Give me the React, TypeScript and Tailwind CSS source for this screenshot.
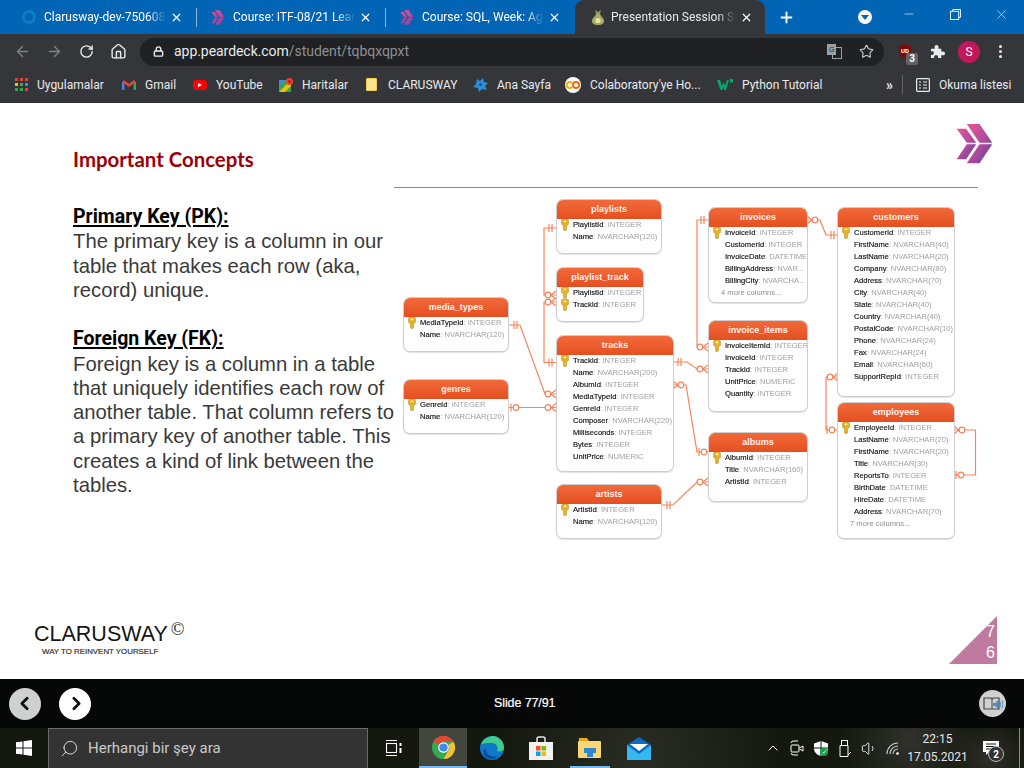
import React from 'react';
import { ArrowLeft, ArrowRight, RotateCw, House, Lock, Star, MoreVertical, Plus, X, Minus, ChevronUp, ChevronLeft, ChevronRight, Search, Volume1 } from 'lucide-react';

const UI_FONT = "font-['Roboto',sans-serif]";

// Clarusway chevrons, used big on the slide and small on the tabs
const Chevrons: React.FC<{ className?: string; id: string }> = ({ className, id }) => (
  <svg viewBox="80 40 110 122" className={className}>
    <defs>
      <linearGradient id={id} x1="0" y1="0" x2="1" y2="1">
        <stop offset="0" stopColor="#e8559a" />
        <stop offset="0.55" stopColor="#b04a9c" />
        <stop offset="1" stopColor="#55429c" />
      </linearGradient>
    </defs>
    <path d="M82 57H110L140 99H112Z M112 103H140L110 148H82Z" fill={`url(#${id})`} />
    <path d="M112 43H150L188 99H150Z M150 103H188L150 160H112Z" fill={`url(#${id})`} />
  </svg>
);

const Tab: React.FC<{ title: string; icon: React.ReactNode; active?: boolean; sep?: boolean }> = ({ title, icon, active, sep }) => (
  <div className={active
    ? 'relative flex h-[34px] w-[190px] shrink-0 items-center rounded-t-[9px] bg-[#35363a] pl-[15px]'
    : 'relative flex h-[34px] w-[189px] shrink-0 items-center pl-[13px]'}>
    <div className="flex w-[16px] shrink-0 items-center justify-center">{icon}</div>
    <div className={active
      ? 'ml-[5px] w-[125px] overflow-hidden whitespace-nowrap text-[12px] text-[#e8eaed] [mask-image:linear-gradient(90deg,#000_85%,transparent)]'
      : 'ml-[7px] w-[122px] overflow-hidden whitespace-nowrap text-[12px] text-white [mask-image:linear-gradient(90deg,#000_85%,transparent)]'}>{title}</div>
    <X size={13} strokeWidth={2.2} className="ml-[4px] shrink-0 text-white" />
    {sep && <div className="absolute right-0 top-[8px] h-[19px] w-px bg-[#8fb6d8]" />}
  </div>
);

const TabStrip = () => (
  <div className={`flex h-[34px] items-center bg-[#0264b4] pl-[8px] ${UI_FONT}`}>
    <Tab
      sep
      title="Clarusway-dev-750608 -"
      icon={<div className="h-[14px] w-[14px] rounded-full border-[3px] border-[#0b7fc7]" />}
    />
    <Tab sep title="Course: ITF-08/21 Learn" icon={<Chevrons id="fav1" className="h-[15px] w-[14px]" />} />
    <Tab title="Course: SQL, Week: Aggr" icon={<Chevrons id="fav2" className="h-[15px] w-[14px]" />} />
    <Tab
      active
      title="Presentation Session Stud"
      icon={
        <svg viewBox="0 0 14 17" className="h-[17px] w-[14px]">
          <path d="M4 1L7 3L10 1L9 5H5Z" fill="#8d9a56" />
          <path d="M5 5H9C10 8 13 9 13 12C13 15 10 16 7 16C4 16 1 15 1 12C1 9 4 8 5 5Z" fill="#a3ad66" />
          <circle cx="7" cy="11.5" r="2.6" fill="#e8e2a0" />
        </svg>
      }
    />
    <Plus size={17} strokeWidth={2.6} className="ml-[13px] text-white" />
    <div className="ml-[63px] flex h-[14px] w-[14px] items-center justify-center rounded-full bg-white">
      <div className="h-0 w-0 border-x-[4px] border-t-[5px] border-x-transparent border-t-[#0264b4]" />
    </div>
    <Minus size={14} strokeWidth={1} className="ml-[30px] mt-[-6px] text-white" />
    <svg viewBox="0 0 12 12" className="ml-[34px] mt-[-6px] h-[11px] w-[11px] text-white" fill="none" stroke="currentColor">
      <path d="M3 2.5V.5H11.5V9H9.5" />
      <rect x=".5" y="2.5" width="9" height="9" />
    </svg>
    <X size={15} strokeWidth={1} className="ml-[33px] mt-[-6px] text-white" />
  </div>
);

const Toolbar = () => (
  <div className={`flex h-[35px] items-center bg-[#35363a] ${UI_FONT}`}>
    <ArrowLeft size={17} strokeWidth={2} className="ml-[14px] text-[#7f8184]" />
    <ArrowRight size={17} strokeWidth={2} className="ml-[15px] text-[#7f8184]" />
    <RotateCw size={15} strokeWidth={2.2} className="ml-[16px] text-[#e8eaed]" />
    <House size={17} strokeWidth={2} className="ml-[16px] text-[#e8eaed]" />
    <div className="ml-[13px] flex h-[28px] w-[744px] items-center rounded-full bg-[#202124] pl-[13px] pr-[10px]">
      <Lock size={11} strokeWidth={3} className="text-[#e8eaed]" />
      <div className="ml-[10px] text-[14px] tracking-[-0.05px] text-[#e8eaed]">
        app.peardeck.com<span className="text-[#8d8f92]">/student/tqbqxqpxt</span>
      </div>
      <div className="ml-auto flex items-center gap-[17px]">
        <svg viewBox="0 0 15 15" className="h-[15px] w-[15px]">
          <rect x="0" y="0" width="9" height="11" fill="#9aa0a6" />
          <rect x="5.5" y="3.5" width="9" height="11" fill="none" stroke="#9aa0a6" />
          <text x="2" y="8" fontSize="7" fontFamily="Liberation Sans" fill="#202124">G</text>
        </svg>
        <Star size={15} strokeWidth={1.8} className="text-[#c6c8ca]" />
      </div>
    </div>
    <div className="relative ml-[14px] h-[15px] w-[15px]">
      <svg viewBox="0 0 14 15" className="h-[15px] w-[14px]">
        <path d="M7 0L13 2V8C13 11 10 14 7 15C4 14 1 11 1 8V2Z" fill="#7a0c0c" />
      </svg>
      <span className="absolute left-[3px] top-[3px] text-[6px] font-bold leading-[7px] text-white">UD</span>
      <span className="absolute left-[8px] top-[9px] h-[12px] w-[12px] rounded-[2px] bg-[#5f6368] text-center text-[10px] font-bold leading-[12px] text-white">3</span>
    </div>
    <svg viewBox="0 0 16 16" className="ml-[17px] h-[15px] w-[15px] text-[#e8eaed]" fill="currentColor">
      <path d="M1 5H5C4.5 2 5.5 1 7 1S9.500 2 9 5H12V8C15 7.500 16 8.500 16 10S15 12.500 12 12V15H8.500C9 12.500 8 12 6.500 12S4 12.500 4.500 15H1V11.500C3.500 12 4 11 4 9.500S3.500 7.500 1 8Z" />
    </svg>
    <div className="ml-[13px] flex h-[22px] w-[22px] items-center justify-center rounded-full bg-[#c2185b] text-[12px] text-white">S</div>
    <MoreVertical size={17} strokeWidth={2.4} className="ml-[12px] text-[#e8eaed]" />
  </div>
);

type Bookmark = { label: string; width: string; icon: React.ReactNode };

const bookmarks: Bookmark[] = [
  {
    label: 'Uygulamalar',
    width: 'w-[107px]',
    icon: (
      <svg viewBox="0 0 13 13" className="h-[13px] w-[13px]">
        {[0, 5, 10].map((y) => [0, 5, 10].map((x) => (
          <rect key={`${x}-${y}`} x={x} y={y} width="3" height="3" fill={y === 0 ? (x === 5 ? '#ea4335' : '#d8443a') : y === 5 ? (x === 0 ? '#fbbc04' : x === 5 ? '#34a853' : '#4285f4') : x === 10 ? '#ea4335' : '#34a853'} />
        )))}
      </svg>
    ),
  },
  {
    label: 'Gmail',
    width: 'w-[71px]',
    icon: (
      <svg viewBox="0 0 14 11" className="h-[11px] w-[14px]" fill="none" strokeWidth="2.400">
        <path d="M1.200 11V3" stroke="#4285f4" />
        <path d="M12.800 11V3" stroke="#34a853" />
        <path d="M1.200 2L7 6.500L12.800 2" stroke="#ea4335" />
      </svg>
    ),
  },
  {
    label: 'YouTube',
    width: 'w-[86px]',
    icon: (
      <div className="flex h-[10px] w-[14px] items-center justify-center rounded-[3px] bg-[#f00]">
        <div className="h-0 w-0 border-y-[2.500px] border-l-[4px] border-y-transparent border-l-white" />
      </div>
    ),
  },
  {
    label: 'Haritalar',
    width: 'w-[87px]',
    icon: (
      <svg viewBox="0 0 14 14" className="h-[14px] w-[14px]">
        <rect y="2" width="12" height="12" fill="#34a853" />
        <path d="M0 14L12 2V8L6 14Z" fill="#fbbc04" />
        <path d="M0 2H6L0 8Z" fill="#4285f4" />
        <circle cx="10.500" cy="3.500" r="3.500" fill="#ea4335" />
        <circle cx="10.500" cy="3.500" r="1.200" fill="#a50e0e" />
      </svg>
    ),
  },
  {
    label: 'CLARUSWAY',
    width: 'w-[107px]',
    icon: <div className="mr-[2px] h-[13px] w-[11px] rounded-[1px] border border-[#f7cb4d] bg-[#fde293]" />,
  },
  {
    label: 'Ana Sayfa',
    width: 'w-[92px]',
    icon: (
      <svg viewBox="0 0 15 14" className="h-[14px] w-[15px]" fill="#2f8fd6">
        <path d="M4 1L7 3L10 0L11 4L15 5L12 8L14 12L9 11L6 14L5 10L0 9L3 6Z" />
        <circle cx="7.500" cy="6.500" r="1.500" fill="#0b5aa3" />
      </svg>
    ),
  },
  {
    label: "Colaboratory'ye Ho...",
    width: 'w-[152px]',
    icon: (
      <div className="flex h-[16px] w-[16px] items-center justify-center rounded-full bg-[#fafafa]">
        <svg viewBox="0 0 14 8" className="h-[8px] w-[14px]" fill="none" stroke="#f9ab00" strokeWidth="2">
          <path d="M6 2A3 3 0 1 0 6 6" />
          <circle cx="10" cy="4" r="3" stroke="#e8710a" />
        </svg>
      </div>
    ),
  },
  {
    label: 'Python Tutorial',
    width: 'w-[150px]',
    icon: (
      <svg viewBox="0 0 16 11" className="h-[11px] w-[16px]" fill="#04aa6d">
        <path d="M0 1H3L5 7L6.500 3L8 7L10 1H12L9 11H7L6.500 8L5 11H3.500Z" />
        <rect x="13" y="0" width="3" height="3.500" />
      </svg>
    ),
  },
];

const Bookmarks = () => (
  <div className={`flex h-[34px] items-center border-b border-[#2d2e31] bg-[#35363a] pb-[2px] pl-[15px] text-[12px] text-[#e8eaed] ${UI_FONT}`}>
    {bookmarks.map((b) => (
      <div key={b.label} className={`flex shrink-0 items-center ${b.width}`}>
        {b.icon}
        <span className="ml-[9px] whitespace-nowrap">{b.label}</span>
      </div>
    ))}
    <span className="ml-[19px] text-[14px] font-bold leading-none">»</span>
    <div className="ml-[9px] h-[19px] w-px bg-[#5f6368]" />
    <svg viewBox="0 0 14 14" className="ml-[13px] h-[14px] w-[14px]" fill="none" stroke="#e8eaed" strokeWidth="1.200">
      <rect x=".6" y=".6" width="12.800" height="12.800" rx="1" />
      <path d="M3 4H5M3 7H5M3 10H5M7 4H11M7 7H11M7 10H11" />
    </svg>
    <span className="ml-[9px] whitespace-nowrap">Okuma listesi</span>
  </div>
);

type ErdTable = { name: string; pos: string; rows: string[]; more?: string; keys?: number };

const erdTables: ErdTable[] = [
  { name: 'playlists', pos: 'left-[162px] top-[9px] w-[106px] h-[55px]', rows: ['PlaylistId|INTEGER', 'Name|NVARCHAR(120)'] },
  { name: 'playlist_track', pos: 'left-[162px] top-[77px] w-[88px] h-[55px]', rows: ['PlaylistId|INTEGER', 'TrackId|INTEGER'], keys: 2 },
  { name: 'media_types', pos: 'left-[9px] top-[107px] w-[106px] h-[55px]', rows: ['MediaTypeId|INTEGER', 'Name|NVARCHAR(120)'] },
  { name: 'genres', pos: 'left-[9px] top-[189px] w-[106px] h-[55px]', rows: ['GenreId|INTEGER', 'Name|NVARCHAR(120)'] },
  {
    name: 'tracks',
    pos: 'left-[162px] top-[145px] w-[118px] h-[137px]',
    rows: ['TrackId|INTEGER', 'Name|NVARCHAR(200)', 'AlbumId|INTEGER', 'MediaTypeId|INTEGER', 'GenreId|INTEGER', 'Composer|NVARCHAR(220)', 'Milliseconds|INTEGER', 'Bytes|INTEGER', 'UnitPrice|NUMERIC'],
  },
  { name: 'artists', pos: 'left-[162px] top-[294px] w-[106px] h-[55px]', rows: ['ArtistId|INTEGER', 'Name|NVARCHAR(120)'] },
  {
    name: 'invoices',
    pos: 'left-[314px] top-[17px] w-[100px] h-[96px]',
    rows: ['InvoiceId|INTEGER', 'CustomerId|INTEGER', 'InvoiceDate|DATETIME', 'BillingAddress|NVAR...', 'BillingCity|NVARCHA...'],
    more: '4 more columns...',
  },
  {
    name: 'invoice_items',
    pos: 'left-[314px] top-[130px] w-[100px] h-[92px]',
    rows: ['InvoiceItemId|INTEGER', 'InvoiceId|INTEGER', 'TrackId|INTEGER', 'UnitPrice|NUMERIC', 'Quantity|INTEGER'],
  },
  { name: 'albums', pos: 'left-[314px] top-[242px] w-[100px] h-[70px]', rows: ['AlbumId|INTEGER', 'Title|NVARCHAR(160)', 'ArtistId|INTEGER'] },
  {
    name: 'customers',
    pos: 'left-[443px] top-[17px] w-[118px] h-[190px]',
    rows: ['CustomerId|INTEGER', 'FirstName|NVARCHAR(40)', 'LastName|NVARCHAR(20)', 'Company|NVARCHAR(80)', 'Address|NVARCHAR(70)', 'City|NVARCHAR(40)', 'State|NVARCHAR(40)', 'Country|NVARCHAR(40)', 'PostalCode|NVARCHAR(10)', 'Phone|NVARCHAR(24)', 'Fax|NVARCHAR(24)', 'Email|NVARCHAR(60)', 'SupportRepId|INTEGER'],
  },
  {
    name: 'employees',
    pos: 'left-[443px] top-[212px] w-[118px] h-[137px]',
    rows: ['EmployeeId|INTEGER', 'LastName|NVARCHAR(20)', 'FirstName|NVARCHAR(20)', 'Title|NVARCHAR(30)', 'ReportsTo|INTEGER', 'BirthDate|DATETIME', 'HireDate|DATETIME', 'Address|NVARCHAR(70)'],
    more: '7 more columns...',
  },
];

const KeyIcon = () => (
  <svg viewBox="0 0 8 12" className="h-[12px] w-[8px] shrink-0">
    <path d="M0.500 1.500Q0.500 0 2 0H6Q7.500 0 7.500 1.500V5Q7.500 6 5.500 6.500V11L4 12L2.500 11V6.500Q0.500 6 0.500 5Z" fill="#e3b32c" stroke="#b98a1c" strokeWidth=".5" />
    <rect x="2.800" y="1.500" width="2.400" height="1.600" fill="#fff3b0" />
  </svg>
);

const ErdNode: React.FC<{ table: ErdTable }> = ({ table }) => (
  <div className={`absolute overflow-hidden rounded-[7px] border border-[#cfcfcf] bg-white font-['Liberation_Sans',sans-serif] shadow-[0_1px_1px_rgba(0,0,0,0.12)] ${table.pos}`}>
    <div className="h-[19px] bg-gradient-to-b from-[#f2693a] to-[#e54f20] text-center text-[9px] font-bold leading-[18px] text-[#fff3ec]">{table.name}</div>
    {table.rows.map((row, i) => {
      const [col, type] = row.split('|');
      return (
        <div key={col} className="flex h-[12px] items-center whitespace-nowrap pl-[4px] text-[7.6px]">
          <div className="w-[8px] shrink-0">{i < (table.keys ?? 1) && <KeyIcon />}</div>
          <span className="ml-[4px] text-[#111] [-webkit-text-stroke:0.15px_#111]">{col}</span>
          <span className="text-[#a0a0a0]">: {type}</span>
        </div>
      );
    })}
    {table.more && <div className="flex h-[12px] items-center pl-[12px] text-[7.6px] text-[#8f8f8f]">{table.more}</div>}
  </div>
);

// One/many line ends of the diagram, in page coordinates
const Bars: React.FC<{ x: number; y: number }> = ({ x, y }) => (
  <path d={`M${x} ${y - 4}V${y + 4}M${x + 3} ${y - 4}V${y + 4}`} />
);
const Crow: React.FC<{ x: number; y: number; dir: 1 | -1 }> = ({ x, y, dir }) => (
  <g>
    <circle cx={x} cy={y} r="2.800" fill="#fff" />
    <path d={`M${x + 3 * dir} ${y}L${x + 8 * dir} ${y - 4}M${x + 3 * dir} ${y}L${x + 8 * dir} ${y + 4}`} />
  </g>
);
const ZeroOne: React.FC<{ x: number; y: number }> = ({ x, y }) => (
  <g>
    <circle cx={x} cy={y} r="2.800" fill="#fff" />
    <path d={`M${x - 5} ${y - 4}V${y + 4}`} />
  </g>
);

const Connectors = () => (
  <svg viewBox="394 190 584 360" className="absolute left-0 top-0 h-[360px] w-[584px]" fill="none" stroke="#f7845a" strokeWidth="1.200">
    <path d="M556 228H544V295H556" />
    <path d="M556 362.500H544V302H556" />
    <path d="M509 325H520L545 394H556" />
    <path d="M509 407.500H556" />
    <path d="M673 362H687L697 369H708" />
    <path d="M673 385H686L697 452H708" />
    <path d="M662 505H673L697 482H708" />
    <path d="M708 220H697V347H708" />
    <path d="M808 220H820L826 235H837" />
    <path d="M837 377H826V430H837" />
    <path d="M954 430H975.500V475H954" />
    <Bars x={549} y={228} />
    <Bars x={549} y={362.5} />
    <Bars x={514} y={325} />
    <Bars x={678} y={362} />
    <Bars x={667} y={505} />
    <Bars x={701} y={220} />
    <Bars x={831} y={235} />
    <Crow x={548} y={295} dir={1} />
    <Crow x={548} y={302} dir={1} />
    <Crow x={548} y={394} dir={1} />
    <Crow x={548} y={407.5} dir={1} />
    <Crow x={681} y={385} dir={-1} />
    <Crow x={700} y={369} dir={1} />
    <Crow x={700} y={347} dir={1} />
    <Crow x={700} y={482} dir={1} />
    <Crow x={815} y={220} dir={-1} />
    <Crow x={830} y={377} dir={1} />
    <Crow x={962} y={430} dir={-1} />
    <ZeroOne x={516} y={407.5} />
    <ZeroOne x={704} y={452} />
    <ZeroOne x={832} y={430} />
    <ZeroOne x={961} y={475} />
  </svg>
);

const Slide = () => (
  <div className="flex h-[576px] flex-col overflow-hidden bg-white font-['Liberation_Sans',sans-serif]">
    <div className="flex h-[504px]">
      <div className="w-[394px] shrink-0 pl-[73px]">
        <h1 className="mt-[45px] font-['Lato',sans-serif] text-[20.400px] font-bold leading-[22px] text-[#9c0006]">Important Concepts</h1>
        <div className="mt-[34px] whitespace-nowrap text-[20.300px] leading-[24.250px] text-[#3a3a3a]">
          <p><b className="font-['Roboto',sans-serif] text-[19.500px] text-black underline decoration-2 underline-offset-2">Primary Key (PK):</b></p>
          <p>The primary key is a column in our</p>
          <p>table that makes each row (aka,</p>
          <p className="mb-[24.250px]">record) unique.</p>
          <p><b className="font-['Roboto',sans-serif] text-[19.500px] text-black underline decoration-2 underline-offset-2">Foreign Key (FK):</b></p>
          <p>Foreign key is a column in a table</p>
          <p>that uniquely identifies each row of</p>
          <p>another table. That column refers to</p>
          <p>a primary key of another table. This</p>
          <p>creates a kind of link between the</p>
          <p>tables.</p>
        </div>
      </div>
      <div className="w-[584px] shrink-0">
        <div className="flex h-[84px] justify-end pt-[20px]">
          <Chevrons id="brand" className="mr-[-15px] h-[41px] w-[37px]" />
        </div>
        <div className="h-px bg-[#8a8a8a]" />
        <div className="relative mt-[2px] h-[360px] blur-[0.35px]">
          <Connectors />
          {erdTables.map((t) => <ErdNode key={t.name} table={t} />)}
        </div>
      </div>
    </div>
    <div className="flex flex-1 items-start justify-between pl-[34px] pr-[27px]">
      <div className="mt-[15px]">
        <div className="flex items-start text-[21.500px] leading-[24px] text-[#161616]">
          CLARUSWAY<span className="ml-[3px] mt-[-3px] font-['Liberation_Serif',serif] text-[18px] leading-[20px]">©</span>
        </div>
        <div className="ml-[8px] mt-[1px] text-[7.900px] leading-[10px] text-[#333] [-webkit-text-stroke:0.2px_#333]">WAY TO REINVENT YOURSELF</div>
      </div>
      <div className="mt-[9px] h-[48px] w-[48px] whitespace-pre-line bg-[#c07aa0] pr-[2px] pt-[5px] text-right text-[16px] leading-[21px] text-white [clip-path:polygon(100%_0,100%_100%,0_100%)]">
        {'7\n6'}
      </div>
    </div>
  </div>
);

const SlideBar = () => (
  <div className="relative flex h-[49px] items-center bg-[#060808] pl-[9px] pr-[18px] font-['Liberation_Sans',sans-serif]">
    <div className="flex h-[32px] w-[32px] items-center justify-center rounded-full bg-[#cfd0d0]">
      <ChevronLeft size={21} strokeWidth={3.2} className="mr-[2px] text-[#111]" />
    </div>
    <div className="ml-[18px] flex h-[32px] w-[32px] items-center justify-center rounded-full bg-white">
      <ChevronRight size={21} strokeWidth={3.2} className="ml-[2px] text-[#111]" />
    </div>
    <div className="flex-1 pl-[403px] text-[12.500px] tracking-[-0.1px] text-white [-webkit-text-stroke:0.2px_white]">Slide 77/91</div>
    <div className="flex h-[27px] w-[27px] items-center justify-center rounded-full bg-[#cfd0d0]">
      <svg viewBox="0 0 20 16" className="h-[16px] w-[20px]" fill="none">
        <path d="M1 2H8L9 3L10 2H16V13H1Z" stroke="#444" strokeWidth="1.200" />
        <path d="M9 3V13" stroke="#444" />
        <path d="M10 7H12L15 4.500V12.500L12 10H10Z" fill="#4a90d9" />
        <path d="M17 6Q18.500 8.500 17 11M19 4.500Q20.500 8.500 19 12.500" stroke="#4a90d9" />
      </svg>
    </div>
  </div>
);

const Taskbar = () => (
  <div className={`relative flex h-[40px] items-stretch overflow-hidden bg-[#15180f] ${UI_FONT}`}>
    <div className="absolute inset-0 bg-[radial-gradient(circle_at_640px_28px,#2a2d24_0,transparent_140px),radial-gradient(circle_at_910px_12px,#30322b_0,transparent_70px),radial-gradient(circle_at_990px_30px,#2e3029_0,transparent_40px)]" />
    <div className="relative flex w-[48px] items-center justify-center">
      <svg viewBox="0 0 16 16" className="h-[16px] w-[16px]" fill="#fff">
        <path d="M0 2.300L6.500 1.400V7.500H0Z M7.500 1.300L16 0V7.500H7.500Z M0 8.500H6.500V14.600L0 13.700Z M7.500 8.500H16V16L7.500 14.700Z" />
      </svg>
    </div>
    <div className="relative flex w-[320px] items-center border border-b-0 border-[#6a6a6a] bg-[#333333] pl-[11px]">
      <Search size={19} strokeWidth={1.2} className="scale-x-[-1] text-[#e0e0e0]" />
      <span className="ml-[9px] text-[15px] text-[#c9c9c9]">Herhangi bir şey ara</span>
    </div>
    <div className="relative flex w-[51px] items-center justify-center">
      <svg viewBox="0 0 16 16" className="h-[16px] w-[16px]" fill="none" stroke="#fff" strokeWidth="1.100">
        <path d="M0 .500H11M0 15.500H11" />
        <rect x=".5" y="3.500" width="10" height="9" />
        <path d="M14.500 3V6M14.500 8V13" strokeWidth="2" />
      </svg>
    </div>
    <div className="relative flex w-[48px] items-center justify-center border-b-2 border-[#76b9ed] bg-[#42463c]">
      <svg viewBox="0 0 24 24" className="h-[23px] w-[23px]">
        <circle cx="12" cy="12" r="12" fill="#34a853" />
        <path d="M12 0A12 12 0 0 1 22.400 6H12A6 6 0 0 0 6.800 9L1.600 6A12 12 0 0 1 12 0Z" fill="#ea4335" />
        <path d="M22.400 6A12 12 0 0 1 12 24L17.200 15A6 6 0 0 0 17.200 9Z" fill="#fbc02d" />
        <circle cx="12" cy="12" r="5.500" fill="#fff" />
        <circle cx="12" cy="12" r="4.300" fill="#4285f4" />
      </svg>
    </div>
    <div className="relative flex w-[49px] items-center justify-center">
      <svg viewBox="0 0 24 24" className="h-[24px] w-[24px]">
        <circle cx="12" cy="12" r="12" fill="#0f78c9" />
        <path d="M1 9C3 2 10 0 14 0C20 1 24 6 24 12C24 15 21 16 17 15C19 11 16 7 12 7C7 7 3 7 1 9Z" fill="#3ecb8c" />
        <path d="M6 13C6 19 12 22 18 20C15 24 8 24 4 19C2 15 4 12 6 13Z" fill="#0a4f9c" />
      </svg>
    </div>
    <div className="relative flex w-[49px] items-center justify-center">
      <svg viewBox="0 0 24 24" className="h-[24px] w-[24px]">
        <path d="M8 6V3Q8 1 10 1H14Q16 1 16 3V6" fill="none" stroke="#e8e8e8" strokeWidth="1.500" />
        <rect y="6" width="24" height="18" fill="#f2f2f2" />
        <rect x="7" y="10" width="4.500" height="4.500" fill="#f25022" />
        <rect x="12.500" y="10" width="4.500" height="4.500" fill="#7fba00" />
        <rect x="7" y="15.500" width="4.500" height="4.500" fill="#00a4ef" />
        <rect x="12.500" y="15.500" width="4.500" height="4.500" fill="#ffb900" />
      </svg>
    </div>
    <div className="relative flex w-[49px] items-center justify-center px-[5px]">
      <div className="absolute bottom-0 left-[5px] h-[2px] w-[40px] bg-[#76b9ed]" />
      <svg viewBox="0 0 24 20" className="h-[20px] w-[24px]">
        <path d="M1 0H9L11 3H22V7H1Z" fill="#e8a820" />
        <rect x="0" y="3" width="23" height="17" rx="1" fill="#f8d774" />
        <path d="M6 10H18V15H15V19H9V15H6Z" fill="#2f88d0" />
      </svg>
    </div>
    <div className="relative flex w-[49px] items-center justify-center">
      <svg viewBox="0 0 24 23" className="h-[23px] w-[24px]">
        <path d="M0 8L12 0L24 8V23H0Z" fill="#0f6cbd" />
        <path d="M0 8L12 17L24 8V23H0Z" fill="#35b8f1" />
        <path d="M3 7H21L12 14Z" fill="#fff" />
      </svg>
    </div>
    <div className="relative flex flex-1 items-center justify-end text-white">
      <div className="flex w-[24px] justify-center"><ChevronUp size={16} strokeWidth={1.500} /></div>
      <div className="flex w-[24px] justify-center">
        <svg viewBox="0 0 14 16" className="h-[16px] w-[14px]" fill="none" stroke="#fff">
          <path d="M1 3Q1 1 4 1H8M1 13Q1 15 4 15H8" />
          <rect x="1" y="5" width="8" height="7" rx="1" />
          <path d="M9.500 8L13 6V11L9.500 9" />
        </svg>
      </div>
      <div className="relative flex w-[24px] justify-center">
        <svg viewBox="0 0 14 15" className="h-[15px] w-[14px]" fill="#fff">
          <path d="M7 0L14 2.500V8C14 11 11 14 7 15C3 14 0 11 0 8V2.500Z" />
          <path d="M7 0V15M0 7H14" stroke="#15180f" />
        </svg>
        <div className="absolute left-[11px] top-[7px] flex h-[8px] w-[8px] items-center justify-center rounded-full bg-[#16a34a] text-[6px] leading-none">✓</div>
      </div>
      <div className="flex w-[24px] justify-center">
        <svg viewBox="0 0 12 17" className="h-[17px] w-[12px]" fill="none" stroke="#fff">
          <rect x="2.500" y=".5" width="6" height="5" />
          <path d="M1 5.500H9V16.500H1Z M9 15L12 12" />
        </svg>
      </div>
      <div className="flex w-[24px] justify-center"><Volume1 size={17} strokeWidth={1.200} /></div>
      <div className="flex w-[24px] justify-center">
        <svg viewBox="0 0 14 13" className="h-[13px] w-[14px]" fill="none" stroke="#c8c8c8" strokeWidth="1.100">
          <path d="M1 12A11 11 0 0 1 12 1M4 12A8 8 0 0 1 12 4M7 12A5 5 0 0 1 12 7" />
          <circle cx="11.500" cy="11.500" r="1.300" fill="#fff" stroke="none" />
        </svg>
      </div>
      <div className="flex w-[65px] flex-col items-center text-[12px] leading-[18px] text-[#e6e6e6]">
        <span>22:15</span>
        <span>17.05.2021</span>
      </div>
      <div className="relative flex h-full w-[49px] items-center pl-[13px]">
        <svg viewBox="0 0 16 14" className="h-[14px] w-[16px]">
          <path d="M0 0H16V11H6L3 14V11H0Z" fill="#fff" />
          <path d="M3 3H13M3 5.500H13M3 8H10" stroke="#15180f" />
        </svg>
        <div className="absolute left-[18px] top-[18px] flex h-[16px] w-[16px] items-center justify-center rounded-full border border-[#bbb] bg-[#333] text-[10px] font-bold text-white">2</div>
      </div>
      <div className="h-full w-[5px] border-l border-[#8a8a8a]" />
    </div>
  </div>
);

export default function App() {
  return (
    <div className="h-[768px] w-[1024px] overflow-hidden">
      <TabStrip />
      <Toolbar />
      <Bookmarks />
      <Slide />
      <SlideBar />
      <Taskbar />
    </div>
  );
}
